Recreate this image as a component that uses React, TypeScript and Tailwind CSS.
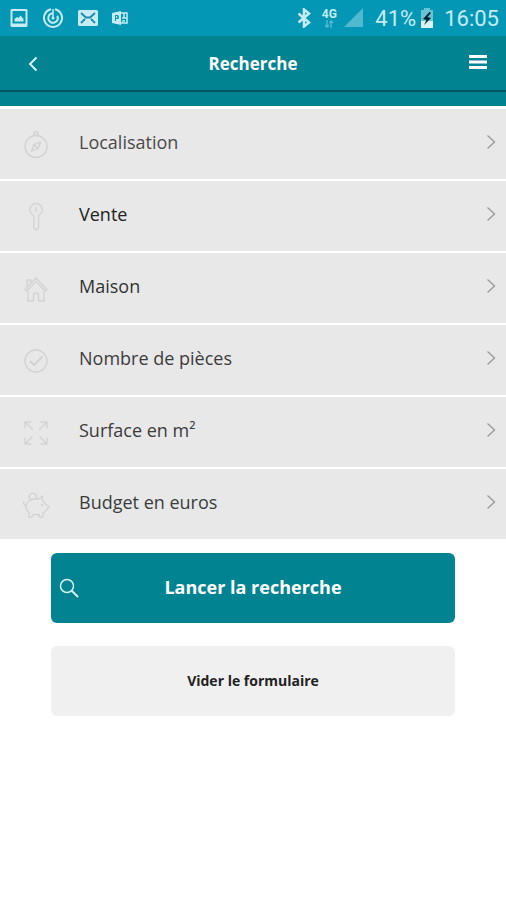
import type { ReactNode } from "react";

const thin = {
  fill: "none",
  stroke: "currentColor",
  strokeWidth: 1.3,
  strokeLinecap: "round" as const,
  strokeLinejoin: "round" as const,
};

function RowIcon({ children }: { children: ReactNode }) {
  return (
    <svg viewBox="0 0 28 28" className="h-7 w-7 shrink-0 text-[#d2d2d2]" aria-hidden="true" {...thin}>
      {children}
    </svg>
  );
}

const rows: { label: string; tone: string; icon: ReactNode }[] = [
  {
    label: "Localisation",
    tone: "text-[#4a4a4a]",
    icon: (
      <>
        <circle cx="14" cy="15.500" r="11" />
        <path d="M12.500 4.500V3.500M15.500 4.500V3.500" />
        <circle cx="14" cy="2.500" r="2" />
        <path d="M18.500 11l-2.500 6.500-6.500 2.500 2.500-6.500zM12 13.500l4 4" />
      </>
    ),
  },
  {
    label: "Vente",
    tone: "text-[#222]",
    icon: (
      <>
        <path d="M11.800 12.500a6.200 6.200 0 1 1 4.700 0V25l-2.300 2-2.400-2z" />
        <path d="M14 4.500v4" />
      </>
    ),
  },
  {
    label: "Maison",
    tone: "text-[#333]",
    icon: (
      <>
        <path d="M3 14.500L14 3l11 11.500-1.800 1.500L14 6.500 4.800 16z" />
        <path d="M5 11V5h4v2.500M6 16v10h5.500v-7q2.500-2 5 0v7H22V16" />
      </>
    ),
  },
  {
    label: "Nombre de pièces",
    tone: "text-[#3c3c3c]",
    icon: (
      <>
        <circle cx="14" cy="14" r="11" />
        <path d="M8.500 14.500l3.500 3.500 8-8" strokeWidth="1.800" />
      </>
    ),
  },
  {
    label: "Surface en m²",
    tone: "text-[#3c3c3c]",
    icon: (
      <path d="M3 9V3h6M3 3l7.500 7.500M19 3h6v6M25 3l-7.500 7.500M3 19v6h6M3 25l7-7M19 25h6v-6M25 25l-7-7" />
    ),
  },
  {
    label: "Budget en euros",
    tone: "text-[#3c3c3c]",
    icon: (
      <>
        <path d="M4 16c0-5 4-8 9-8h4l3.500-3v4.500c1.500 1 2.500 2.500 3.500 4l3 2.500-3 3.500c-1 1.500-2 2-3 2.500v4h-3.500l-.5-2.500h-6l-1 2.500H7v-4.500C5 20.500 4 18.500 4 16z" />
        <path d="M8.500 8.500a3.600 3.600 0 1 1 5.500-.8" />
        <path d="M4 14.500C1.500 14 1 12 2 10.500" />
        <circle cx="20" cy="14" r=".6" />
      </>
    ),
  },
];

function StatusBar() {
  return (
    <div className="flex h-9 items-center justify-between bg-[#0397b5] pr-[7px] pl-2.5 text-[#c5ecf4]">
      <div className="flex items-center gap-4" aria-hidden="true">
        <svg viewBox="0 0 18 18" className="h-[18px] w-[18px]">
          <path fill="currentColor" fillRule="evenodd" d="M1.500 0h15l1 1v16l-1 1h-15l-1-1V1zM2.500 2v12.500h13V2zM4.500 12.500V10l2.500-2 1.500 1 2-2.500 3 3.500v2.500z" />
        </svg>
        <svg viewBox="0 0 20 20" className="-mx-0.5 h-5 w-[22px]" fill="none" stroke="currentColor" strokeWidth="2">
          <path d="M8 1.200a9 9 0 1 0 4 0" />
          <path d="M10 5.200a4.800 4.800 0 1 0 4.300 2.600" />
          <path d="M10 1v8" strokeWidth="1.500" />
          <circle cx="10" cy="10" r="1.500" fill="currentColor" stroke="none" />
        </svg>
        <svg viewBox="0 0 20 16" className="-mr-0.5 h-4 w-5">
          <rect width="20" height="16" rx="1.500" fill="currentColor" />
          <path d="M3 3l5 4.500h4L17 3M3 13l4-4M17 13l-4-4" fill="none" stroke="#178ca8" strokeWidth="1.800" />
        </svg>
        <svg viewBox="0 0 16 16" className="h-4 w-4">
          <path fill="currentColor" fillRule="evenodd" d="M0 3l9-2v14l-9-2zM3 5v6h1V9h1.500c2 0 2-4 0-4zM4 6h1.200v2H4z" />
          <path fill="none" stroke="currentColor" strokeWidth="1.500" d="M9 3h6v10H9M12 3v5M10 8h5M10 11h3" />
        </svg>
      </div>
      <div className="flex items-center font-['Roboto',sans-serif]">
        <svg viewBox="0 0 14 20" className="mr-2.5 h-5 w-3.5" fill="none" stroke="currentColor" strokeWidth="2.500" aria-hidden="true">
          <path d="M1.500 5.500l10.500 9-5 4V1.500l5 4-10.500 9" />
        </svg>
        <div className="mr-1.5 flex w-4 flex-col items-center">
          <span className="text-[12px] leading-3 font-bold">4G</span>
          <svg viewBox="0 0 10 8" className="h-2 w-2.5 text-[#4fb9cf]" fill="none" stroke="currentColor" strokeWidth="1.500" aria-hidden="true">
            <path d="M3 0v7M1 5l2 2 2-2M7 8V1M5.500 3L7 1l2 2" />
          </svg>
        </div>
        <svg viewBox="0 0 20 20" className="mr-3 h-5 w-5" aria-hidden="true">
          <path d="M1 19L20 0v19z" fill="#4fb9cf" />
        </svg>
        <span className="pt-0.5 text-[22px] leading-6">41%</span>
        <svg viewBox="0 0 14 20" className="mr-2.5 ml-1 h-5 w-3.5" aria-hidden="true">
          <path d="M4 0h6v2h3v18H1V2h3z" fill="#69c2d4" />
          <path d="M1 13h12v7H1z" fill="#d8f3f7" />
          <path d="M9.500 4L3 11l3.500 1-2.500 5 7-7-3.500-1L11 5z" fill="#07202a" />
        </svg>
        <span className="pt-0.5 text-[22px] leading-6">16:05</span>
      </div>
    </div>
  );
}

export default function App() {
  return (
    <div className="min-h-screen bg-white font-['Open_Sans',sans-serif]">
      <StatusBar />
      <header className="border-b-[14px] border-[#028391] bg-[#028391] text-white">
        <div className="flex h-14 items-center justify-between border-b-2 border-[#075560] px-4">
          <button type="button" aria-label="Retour" className="flex w-8 justify-center pt-0.5 pl-0.5">
            <svg viewBox="0 0 10 16" className="h-4 w-2.5" fill="none" stroke="#d5f1f3" strokeWidth="2" aria-hidden="true">
              <path d="M8.500 1.500L2 8l6.500 6.500" />
            </svg>
          </button>
          <h1 className="pt-0.5 text-[17px] leading-6 font-bold">Recherche</h1>
          <button type="button" aria-label="Menu" className="flex w-8 justify-center pb-0.5 pl-2">
            <svg viewBox="0 0 20 16" className="h-4 w-5" fill="#fff" aria-hidden="true">
              <path d="M1 1h18v3H1zM1 6.500h18v3H1zM1 12h18v3H1z" />
            </svg>
          </button>
        </div>
      </header>
      <main>
        <ul className="flex flex-col gap-0.5 pt-[3px]">
          {rows.map((row) => (
            <li key={row.label}>
              <button type="button" className="flex h-[70px] w-full items-center bg-[#e8e8e8] pr-2.5 pl-[22px] text-left">
                <span className="pt-0.5">
                  <RowIcon>{row.icon}</RowIcon>
                </span>
                <span className={`ml-[29px] flex-1 pb-1 text-[18px] leading-6 ${row.tone}`}>{row.label}</span>
                <svg viewBox="0 0 10 16" className="mb-1 h-4 w-2.5" fill="none" stroke="#999" strokeWidth="1.300" aria-hidden="true">
                  <path d="M1.500 1.500L8.500 8l-7 6.500" />
                </svg>
              </button>
            </li>
          ))}
        </ul>
        <div className="mx-auto mt-3.5 flex w-4/5 flex-col gap-[23px]">
          <button type="button" className="grid h-[70px] grid-cols-[20px_1fr_20px] items-center rounded-md bg-[#028391] px-2 text-white">
            <svg viewBox="0 0 20 20" className="h-5 w-5" fill="none" stroke="#d5f1f3" strokeWidth="1.500" strokeLinecap="round" aria-hidden="true">
              <circle cx="8" cy="8" r="6.500" />
              <path d="M13 13l5.500 5.500" strokeWidth="2" />
            </svg>
            <span className="pb-0.5 text-[18px] leading-6 font-bold">Lancer la recherche</span>
          </button>
          <button type="button" className="h-[70px] rounded-md bg-[#f0f0f0] text-[14px] leading-5 font-bold text-[#222]">
            Vider le formulaire
          </button>
        </div>
      </main>
    </div>
  );
}
